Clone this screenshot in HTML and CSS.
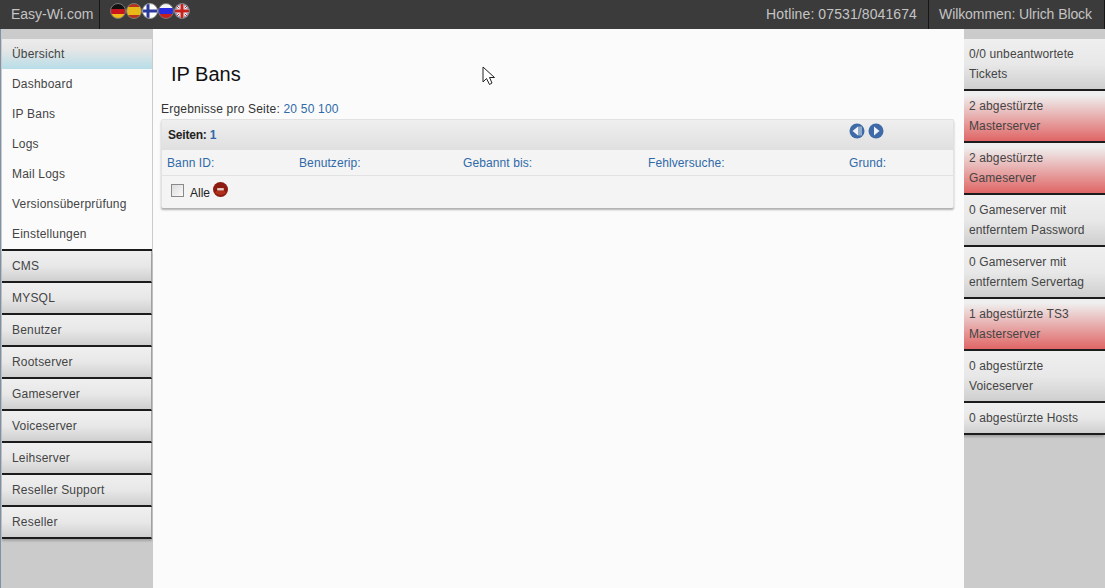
FILE: index.html
```html
<!DOCTYPE html>
<html lang="de">
<head>
<meta charset="utf-8">
<title>IP Bans</title>
<link rel="stylesheet" href="styles.css">
</head>
<body>
<header class="topbar">
  <div class="brand">Easy-Wi.com</div>
  <div class="flags">
    <svg class="flag" viewBox="0 0 16 16"><defs><clipPath id="c"><circle cx="8" cy="8" r="7.5"/></clipPath></defs><g clip-path="url(#c)"><rect width="16" height="6" fill="#111"/><rect y="6" width="16" height="5" fill="#c8141c"/><rect y="11" width="16" height="5" fill="#f0b818"/></g><circle cx="8" cy="8" r="7.5" fill="none" stroke="#777"/></svg>
    <svg class="flag" viewBox="0 0 16 16"><g clip-path="url(#c)"><rect width="16" height="16" fill="#e8b818"/><rect width="16" height="4" fill="#b8321c"/><rect y="12" width="16" height="4" fill="#b8321c"/></g><circle cx="8" cy="8" r="7.5" fill="none" stroke="#777"/></svg>
    <svg class="flag" viewBox="0 0 16 16"><g clip-path="url(#c)"><rect width="16" height="16" fill="#fff"/><rect x="4.5" width="3" height="16" fill="#2a3a9c"/><rect y="6.5" width="16" height="3" fill="#2a3a9c"/></g><circle cx="8" cy="8" r="7.5" fill="none" stroke="#999"/></svg>
    <svg class="flag" viewBox="0 0 16 16"><g clip-path="url(#c)"><rect width="16" height="5" fill="#f4f4f4"/><rect y="5" width="16" height="6" fill="#2a2ae0"/><rect y="11" width="16" height="5" fill="#c8201c"/></g><circle cx="8" cy="8" r="7.5" fill="none" stroke="#777"/></svg>
    <svg class="flag" viewBox="0 0 16 16"><g clip-path="url(#c)"><rect width="16" height="16" fill="#3a4a8c"/><path d="M0 0L16 16M16 0L0 16" stroke="#eee" stroke-width="3"/><path d="M0 0L16 16M16 0L0 16" stroke="#c8201c" stroke-width="1"/><path d="M8 0V16M0 8H16" stroke="#eee" stroke-width="5"/><path d="M8 0V16M0 8H16" stroke="#c8201c" stroke-width="3"/></g><circle cx="8" cy="8" r="7.5" fill="none" stroke="#777"/></svg>
  </div>
  <div class="top-right">
    <div class="hotline">Hotline: 07531/8041674</div>
    <div class="welcome">Wilkommen: Ulrich Block</div>
  </div>
</header>
<div class="layout">
  <nav class="left">
    <div class="head active">Übersicht</div>
    <ul class="sub">
      <li>Dashboard</li>
      <li>IP Bans</li>
      <li>Logs</li>
      <li>Mail Logs</li>
      <li>Versionsüberprüfung</li>
      <li>Einstellungen</li>
    </ul>
    <div class="head">CMS</div>
    <div class="head">MYSQL</div>
    <div class="head">Benutzer</div>
    <div class="head">Rootserver</div>
    <div class="head">Gameserver</div>
    <div class="head">Voiceserver</div>
    <div class="head">Leihserver</div>
    <div class="head">Reseller Support</div>
    <div class="head">Reseller</div>
  </nav>
  <main class="content">
    <h1>IP Bans</h1>
    <p class="perpage">Ergebnisse pro Seite: <a>20</a> <a>50</a> <a>100</a></p>
    <section class="box">
      <div class="box-head">
        <span><b>Seiten:</b> <a class="pg">1</a></span>
        <span class="arrows">
          <svg class="arrow" viewBox="0 0 16 16"><circle cx="8" cy="8" r="7.5" fill="#3f6aa8"/><path d="M9 3.500V12.500L3.500 8z" fill="#eef2f6"/><path d="M9 3.500H13V12.500H9z" fill="#8fabc9"/></svg>
          <svg class="arrow" viewBox="0 0 16 16"><circle cx="8" cy="8" r="7.500" fill="#3f6aa8"/><path d="M6 3.500V12.500L11.500 8z" fill="#eef2f6"/></svg>
        </span>
      </div>
      <div class="cols">
        <span class="c1">Bann ID:</span>
        <span class="c2">Benutzerip:</span>
        <span class="c3">Gebannt bis:</span>
        <span class="c4">Fehlversuche:</span>
        <span class="c5">Grund:</span>
      </div>
      <div class="foot">
        <span class="check"></span>
        <span class="alle">Alle</span>
        <svg class="del" viewBox="0 0 16 16"><circle cx="8" cy="8" r="8" fill="#8c1a10"/><path d="M2 11a7 6 0 0 0 12 0l-3-2H5z" fill="#b0301c"/><rect x="4.500" y="6.500" width="7" height="2.500" fill="#e8d0c8"/></svg>
      </div>
    </section>
    <svg class="cursor" viewBox="0 0 14 20"><path d="M1 1V16L4.500 12.500L7.500 18.500L10 17L7.500 11.500H12.500z" fill="#fff" stroke="#222" stroke-width="1"/></svg>
  </main>
  <aside class="right">
    <div class="note">0/0 unbeantwortete Tickets</div>
    <div class="note bad">2 abgestürzte Masterserver</div>
    <div class="note bad">2 abgestürzte Gameserver</div>
    <div class="note">0 Gameserver mit entferntem Password</div>
    <div class="note">0 Gameserver mit entferntem Servertag</div>
    <div class="note bad">1 abgestürzte TS3 Masterserver</div>
    <div class="note">0 abgestürzte Voiceserver</div>
    <div class="note">0 abgestürzte Hosts</div>
  </aside>
</div>
</body>
</html>
```
FILE: styles.css
```css
* { box-sizing: border-box; }
html, body { margin: 0; height: 100%; }
body {
  width: 1105px;
  height: 588px;
  overflow: hidden;
  font-family: "Liberation Sans", Arial, sans-serif;
  font-size: 12px;
  letter-spacing: .2px;
  color: #333;
  background: #fbfbfb;
}
.topbar {
  display: flex;
  align-items: stretch;
  height: 29px;
  background: #3b3b3b;
  color: #c4c4c4;
  font-size: 14px;
  line-height: 29px;
  letter-spacing: 0;
}
.brand {
  width: 100px;
  padding-left: 11px;
  border-right: 1px solid #161616;
  white-space: nowrap;
}
.flags {
  display: flex;
  padding: 3px 0 0 10px;
  align-items: flex-start;
}
.flag { width: 16px; height: 16px; display: block; }
.top-right { display: flex; margin-left: auto; }
.hotline {
  padding-right: 11px;
  border-right: 1px solid #161616;
  white-space: nowrap;
  letter-spacing: .1px;
}
.welcome {
  width: 176px;
  padding-left: 10px;
  border-right: 1px solid #161616;
  white-space: nowrap;
  letter-spacing: -.08px;
}
.layout { display: flex; height: 559px; }
.left {
  width: 153px;
  flex: none;
  padding: 10px 1px 0 1px;
  background: #cbcbcb;
  border-left: 1px solid #7f93a8;
  color: #444;
}
.head {
  height: 32px;
  line-height: 30px;
  padding-left: 10px;
  background: linear-gradient(#efefef 0%, #e8e8e8 50%, #cfcfcf 100%);
  border-bottom: 2px solid #1c1c1c;
  border-right: 1px solid #a0a0a0;
  box-shadow: 0 2px 2px rgba(0,0,0,.2);
}
.head.active {
  height: 30px;
  line-height: 30px;
  background: linear-gradient(#ececec 0%, #e6e6e6 35%, #b8dde8 100%);
  border: 0;
  box-shadow: none;
}
.sub {
  list-style: none;
  margin: 0;
  padding: 0;
  background: #fbfbfb;
  border-bottom: 2px solid #1c1c1c;
}
.sub li { height: 30px; line-height: 30px; padding-left: 10px; }
.content {
  position: relative;
  width: 811px;
  flex: none;
  padding: 0 10px 0 8px;
  background: #fbfbfb;
}
h1 {
  margin: 0;
  padding: 33px 0 0 10px;
  height: 67px;
  font-size: 20px;
  font-weight: normal;
  line-height: 24px;
  letter-spacing: 0;
  color: #111;
}
.perpage {
  margin: 0;
  height: 23px;
  line-height: 26px;
  color: #333;
}
a { color: #2f6aa8; }
.box {
  height: 89px;
  background: #f4f4f4;
  border: 1px solid #e2e2e2;
  border-bottom: 0;
  box-shadow: 0 2px 2px rgba(0,0,0,.3);
  border-radius: 2px;
}
.box-head {
  position: relative;
  display: flex;
  height: 30px;
  padding-left: 6px;
  line-height: 30px;
  background: linear-gradient(#efefef, #e0e0e0);
  color: #222;
  letter-spacing: -.2px;
}
.pg { font-weight: bold; color: #2f6aa8; }
.arrows { display: flex; gap: 3px; position: absolute; left: 687px; top: 3px; }
.arrow { width: 16px; height: 16px; display: block; }
.cols {
  display: grid;
  grid-template-columns: 132px 164px 185px 201px 1fr;
  height: 26px;
  line-height: 26px;
  padding-left: 5px;
  color: #2f6aa8;
  border-bottom: 1px solid #e2e2e2;
  letter-spacing: .1px;
}
.foot { display: flex; align-items: flex-start; padding: 0 0 0 9px; }
.check {
  width: 13px;
  height: 13px;
  margin-top: 8px;
  background: linear-gradient(135deg, #dcdcdc, #fafafa);
  border: 1px solid #8a8a8a;
}
.alle { margin: 10px 0 0 6px; line-height: 14px; color: #222; letter-spacing: 0; }
.del { width: 15px; height: 15px; margin: 6px 0 0 3px; display: block; }
.cursor { position: absolute; left: 329px; top: 37px; width: 14px; height: 20px; }
.right {
  flex: 1;
  padding-top: 10px;
  background: #cbcbcb;
  color: #444;
  letter-spacing: .12px;
}
.note {
  padding: 5px 4px 5px 5px;
  line-height: 20px;
  background: linear-gradient(#efefef 0%, #e8e8e8 50%, #cfcfcf 100%);
  border-bottom: 2px solid #1c1c1c;
  box-shadow: -1px 2px 2px rgba(0,0,0,.2);
}
.note.bad { background: linear-gradient(#efefef 8%, #e06666 100%); }
```
